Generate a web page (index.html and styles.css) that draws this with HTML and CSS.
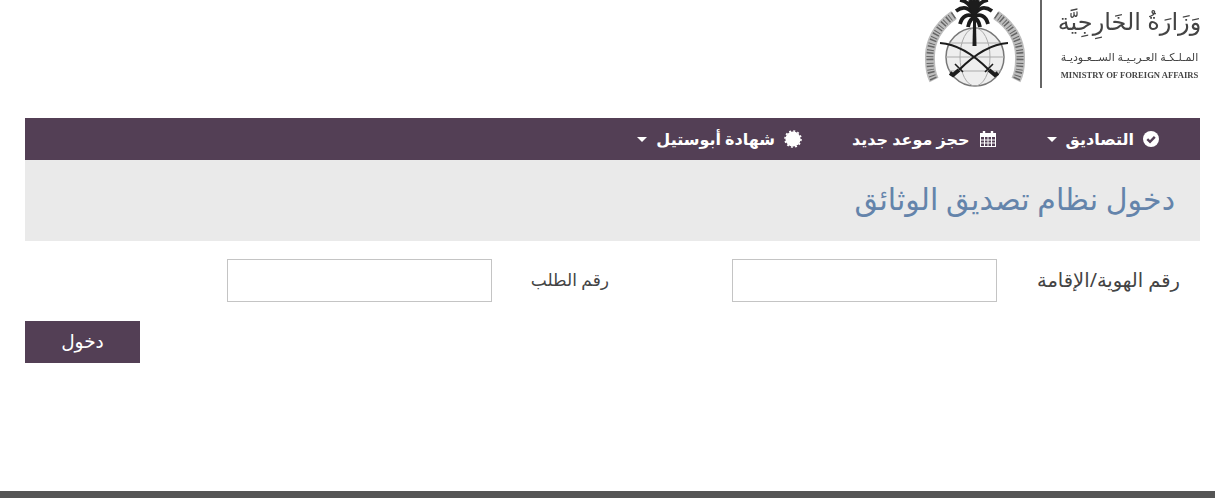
FILE: index.html
```html
<!DOCTYPE html>
<html lang="ar" dir="rtl">
<head>
    <meta charset="UTF-8">
    <title>دخول نظام تصديق الوثائق</title>
    <link rel="stylesheet" href="styles.css">
</head>
<body>
    <header class="top">
        <div class="logo-text">
            <span class="logo-big">وَزَارَةُ الخَارِجِيَّة</span>
            <span class="logo-small">المـلـكـة العـربـيـة الســعـوديـة</span>
            <span class="logo-en" dir="ltr">MINISTRY OF FOREIGN AFFAIRS</span>
        </div>
        <div class="logo-line"></div>
        <svg class="emblem" width="100" height="90" viewBox="0 0 100 90">
            <!-- side ornaments -->
            <g fill="none">
                <path d="M29 15 C13 26 4 42 5 60 C5 68 6 74 9 80" stroke="#bdbdbd" stroke-width="10"/>
                <path d="M71 15 C87 26 96 42 95 60 C95 68 94 74 91 80" stroke="#bdbdbd" stroke-width="10"/>
                <path d="M29 15 C13 26 4 42 5 60 C5 68 6 74 9 80" stroke="#666" stroke-width="7" stroke-dasharray="1.5 2.5 1 1.5"/>
                <path d="M71 15 C87 26 96 42 95 60 C95 68 94 74 91 80" stroke="#666" stroke-width="7" stroke-dasharray="1.5 2.5 1 1.5"/>
            </g>
            <!-- globe -->
            <circle cx="50" cy="57" r="29" fill="#eee" stroke="#777" stroke-width="1.5"/>
            <ellipse cx="50" cy="57" rx="15" ry="29" fill="none" stroke="#aaa"/>
            <path d="M21 57 H79 M24 43 H76 M24 71 H76" fill="none" stroke="#aaa"/>
            <!-- palm -->
            <path d="M47.5 46 H51.5 L50.8 14 H48.2 Z" fill="#1c1c1c"/>
            <g fill="none" stroke="#1c1c1c" stroke-width="3.8">
                <path d="M49 15 C44 7 38 6 31 11"/>
                <path d="M49 15 C54 7 60 6 67 11"/>
                <path d="M49 17 C43 13 37 16 35 24"/>
                <path d="M49 17 C55 13 61 16 63 24"/>
                <path d="M49 13 C46 5 41 1 35 0"/>
                <path d="M49 13 C52 5 57 1 63 0"/>
                <path d="M49 18 C47 18 44 21 43 27"/>
                <path d="M49 18 C51 18 54 21 55 27"/>
                <path d="M49 14 V0 M49 14 L45 0 M49 14 L53 0"/>
            </g>
            <!-- swords -->
            <path d="M15 43 C32 44 48 54 64 70" fill="none" stroke="#1c1c1c" stroke-width="2.2"/>
            <path d="M83 43 C66 44 50 54 34 70" fill="none" stroke="#1c1c1c" stroke-width="2.2"/>
            <path d="M64 70 L70 75 L73 73 M34 70 L28 75 L25 73" fill="none" stroke="#1c1c1c" stroke-width="4"/>
            <path d="M60 72 L68 64 M38 72 L30 64" stroke="#1c1c1c" stroke-width="1.6"/>
        </svg>
    </header>

    <nav class="navbar">
        <a class="nav-item">
            <svg class="icon" width="16" height="16" viewBox="0 0 16 16">
                <circle cx="8" cy="8" r="8" fill="#fff"/>
                <path d="M4.3 8.2 L7 10.8 L11.8 5.8" fill="none" stroke="#533f55" stroke-width="2.4"/>
            </svg>
            التصاديق
            <span class="caret"></span>
        </a>
        <a class="nav-item">
            <svg class="icon" width="18" height="18" viewBox="0 0 18 18">
                <path d="M1 3 H17 V17 H1 Z M2 7 V16 H16 V7 Z" fill="#fff" fill-rule="evenodd"/>
                <path d="M2 10 H16 M2 13 H16 M5.5 7 V16 M9 7 V16 M12.5 7 V16" stroke="#fff"/>
                <path d="M5 1 V5 M13 1 V5" stroke="#fff" stroke-width="2.4"/>
            </svg>
            حجز موعد جديد
        </a>
        <a class="nav-item">
            <svg class="icon" width="18" height="18" viewBox="0 0 18 18">
                <circle cx="9" cy="9" r="7.6" fill="#fff"/>
                <circle cx="9" cy="9" r="8" fill="none" stroke="#fff" stroke-width="1.6" stroke-dasharray="2 2.19"/>
            </svg>
            شهادة أبوستيل
            <span class="caret"></span>
        </a>
    </nav>

    <div class="title-bar">
        <h1>دخول نظام تصديق الوثائق</h1>
    </div>

    <form class="login-form">
        <div class="form-row">
            <label class="label-id">رقم الهوية/الإقامة</label>
            <input class="field" type="text">
            <label class="label-req">رقم الطلب</label>
            <input class="field" type="text">
        </div>
        <button class="submit" type="button">دخول</button>
    </form>

    <footer class="footer"></footer>
</body>
</html>
```

FILE: styles.css
```css
html, body {
    height: 100%;
}

body {
    margin: 0;
    display: flex;
    flex-direction: column;
    background: #fff;
    font-family: 'Noto Sans', 'DejaVu Sans', sans-serif;
    overflow: hidden;
}

.top {
    height: 118px;
    flex: none;
    display: flex;
    padding-right: 15px;
    align-items: flex-start;
}

.logo-text {
    width: 141px;
    height: 88px;
    display: flex;
    flex-direction: column;
    align-items: center;
    color: #444;
    white-space: nowrap;
    filter: blur(0.4px);
}

.logo-big {
    font-size: 24px;
    line-height: 42px;
    height: 48px;
}

.logo-small {
    font-size: 11px;
    line-height: 18px;
    height: 20px;
}

.logo-en {
    font-family: 'Liberation Serif', serif;
    font-size: 8.6px;
    font-weight: bold;
    line-height: 14px;
}

.logo-line {
    width: 2px;
    height: 88px;
    background: #666;
    margin-right: 17px;
}

.emblem {
    margin-right: 15px;
    filter: blur(0.5px);
}

.navbar {
    height: 42px;
    flex: none;
    margin: 0 15px 0 25px;
    background: #533f55;
    display: flex;
    align-items: center;
    gap: 50px;
    padding-right: 41px;
    color: #fff;
}

.nav-item {
    font-size: 16px;
    font-weight: bold;
    display: flex;
    align-items: center;
    gap: 9px;
}

.caret {
    border-top: 5px solid #fff;
    border-left: 5px solid transparent;
    border-right: 5px solid transparent;
}

.title-bar {
    height: 81px;
    flex: none;
    box-sizing: border-box;
    margin: 0 15px 0 25px;
    background: #eaeaea;
    display: flex;
    align-items: center;
    padding-right: 25px;
    padding-bottom: 4px;
}

h1 {
    margin: 0;
    font-size: 30px;
    font-weight: normal;
    color: #6484ab;
}

.login-form {
    flex: 1;
    margin: 0 15px 0 25px;
    padding-top: 18px;
}

.form-row {
    display: flex;
    align-items: center;
}

.field {
    width: 265px;
    height: 43px;
    box-sizing: border-box;
    border: 1px solid #c4c4c4;
}

.label-id {
    width: 203px;
    padding-right: 20px;
    padding-bottom: 2px;
    box-sizing: border-box;
    color: #444;
    font-size: 19.5px;
}

.label-req {
    width: 240px;
    padding-right: 123px;
    padding-bottom: 2px;
    box-sizing: border-box;
    color: #444;
    font-size: 17px;
}

.submit {
    display: block;
    margin-top: 19px;
    margin-right: auto;
    width: 115px;
    height: 42px;
    padding: 0 0 3px;
    border: none;
    background: #533f55;
    color: #fff;
    font-size: 18.5px;
    font-family: inherit;
}

.footer {
    height: 7px;
    flex: none;
    background: #555;
}
```
